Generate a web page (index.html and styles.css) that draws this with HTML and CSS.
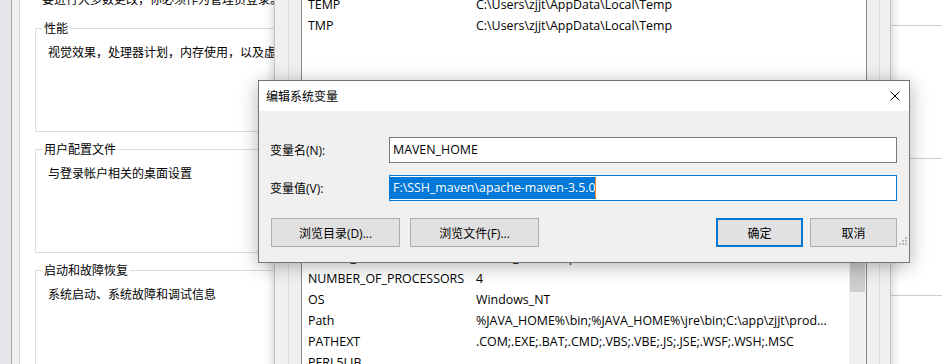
FILE: index.html
```html
<!DOCTYPE html>
<html lang="zh-CN">
<head>
  <meta charset="UTF-8">
  <title>编辑系统变量</title>
  <link rel="stylesheet" href="styles.css">
</head>
<body>
<div class="desktop">

  <!-- window far behind, on the right -->
  <div class="win back-win">
    <div class="back-line line-1"></div>
    <div class="back-line line-2"></div>
    <div class="back-line line-3"></div>
  </div>

  <!-- System properties, advanced tab -->
  <div class="win sys-win">
    <div class="tab-page">
      <p class="note">要进行大多数更改，你必须作为管理员登录。</p>
      <fieldset class="group">
        <legend>性能</legend>
        <div class="group-body">视觉效果，处理器计划，内存使用，以及虚拟内存</div>
      </fieldset>
      <fieldset class="group">
        <legend>用户配置文件</legend>
        <div class="group-body">与登录帐户相关的桌面设置</div>
      </fieldset>
      <fieldset class="group">
        <legend>启动和故障恢复</legend>
        <div class="group-body">系统启动、系统故障和调试信息</div>
      </fieldset>
    </div>
  </div>

  <!-- Environment variables -->
  <div class="win env-win">
    <div class="env-group user-group">
      <div class="list user-list">
        <div class="rows">
          <div class="row"><span class="name">OneDrive</span><span class="val">C:\Users\zjjt\OneDrive</span></div>
          <div class="row"><span class="name">Path</span><span class="val">C:\Users\zjjt\AppData\Local\Microsoft\WindowsApps;</span></div>
          <div class="row"><span class="name">TEMP</span><span class="val">C:\Users\zjjt\AppData\Local\Temp</span></div>
          <div class="row"><span class="name">TMP</span><span class="val">C:\Users\zjjt\AppData\Local\Temp</span></div>
        </div>
      </div>
    </div>
    <div class="env-group sys-group">
      <div class="list sys-list">
        <div class="rows">
          <div class="row"><span class="name">MAVEN_HOME</span><span class="val">F:\SSH_maven\apache-maven-3.5.0</span></div>
          <div class="row"><span class="name">NUMBER_OF_PROCESSORS</span><span class="val">4</span></div>
          <div class="row"><span class="name">OS</span><span class="val">Windows_NT</span></div>
          <div class="row"><span class="name">Path</span><span class="val">%JAVA_HOME%\bin;%JAVA_HOME%\jre\bin;C:\app\zjjt\prod...</span></div>
          <div class="row"><span class="name">PATHEXT</span><span class="val">.COM;.EXE;.BAT;.CMD;.VBS;.VBE;.JS;.JSE;.WSF;.WSH;.MSC</span></div>
          <div class="row"><span class="name">PERL5LIB</span><span class="val"></span></div>
        </div>
        <div class="scrollbar"><div class="thumb"></div></div>
      </div>
    </div>
  </div>

  <!-- Edit system variable dialog -->
  <div class="dlg">
    <div class="dlg-title">
      <span class="dlg-caption">编辑系统变量</span>
      <svg class="close" width="10" height="10" viewBox="0 0 10 10">
        <path d="M0.5 0.5 L9.5 9.5 M9.5 0.5 L0.5 9.5" stroke="#000" stroke-width="1" fill="none"/>
      </svg>
    </div>
    <div class="dlg-body">
      <div class="field">
        <label>变量名(N):</label>
        <div class="textbox"><span class="tb-text">MAVEN_HOME</span></div>
      </div>
      <div class="field">
        <label>变量值(V):</label>
        <div class="textbox focused"><span class="tb-text selected">F:\SSH_maven\apache-maven-3.5.0</span><span class="caret"></span></div>
      </div>
      <div class="btn-row">
        <button class="btn wide first">浏览目录(D)...</button>
        <button class="btn wide">浏览文件(F)...</button>
        <span class="spacer"></span>
        <button class="btn default">确定</button>
        <button class="btn">取消</button>
      </div>
      <svg class="grip" width="8" height="8" viewBox="0 0 8 8">
        <rect x="6" y="0" width="2" height="2" fill="#b9b9b9"/>
        <rect x="3" y="3" width="2" height="2" fill="#b9b9b9"/>
        <rect x="6" y="3" width="2" height="2" fill="#b9b9b9"/>
        <rect x="0" y="6" width="2" height="2" fill="#b9b9b9"/>
        <rect x="3" y="6" width="2" height="2" fill="#b9b9b9"/>
        <rect x="6" y="6" width="2" height="2" fill="#b9b9b9"/>
      </svg>
    </div>
  </div>

</div>
</body>
</html>
```

FILE: styles.css
```css
* {
  box-sizing: border-box;
}
body {
  margin: 0;
  font-family: "Open Sans", "Noto Sans CJK SC", sans-serif;
  font-size: 12px;
  color: #000;
}
.desktop {
  position: relative;
  width: 942px;
  height: 364px;
  overflow: hidden;
  background: linear-gradient(to right, #e4e6e9, #eceef0);
}
.win {
  position: absolute;
}

/* right background window */
.back-win {
  left: 880px;
  top: 0;
  width: 62px;
  height: 364px;
  background-color: #fff;
  padding-top: 25px;
  z-index: 1;
}
.back-line {
  height: 1px;
  background-color: #cdcdcd;
}
.line-2 {
  margin-top: 132px;
}
.line-3 {
  margin-top: 136px;
}

/* system properties */
.sys-win {
  left: 11px;
  top: -40px;
  width: 320px;
  height: 440px;
  background-color: #f0f0f0;
  border-left: 1px solid #a3a3a3;
  padding-left: 7px;
  z-index: 2;
}
.tab-page {
  height: 100%;
  background-color: #fff;
  border-left: 1px solid #d9d9d9;
  padding: 32px 0 0 15px;
}
.note {
  margin: 0 0 0 7px;
  line-height: 16px;
  white-space: nowrap;
}
.group {
  margin: 12px 0 0 0;
  width: 300px;
  border: 1px solid #dcdcdc;
  padding: 0 0 0 6px;
}
.group + .group {
  margin-top: 9px;
}
.group legend {
  padding: 0 2px;
  line-height: 17px;
}
.group-body {
  height: 94px;
  padding: 8px 0 0 6px;
  line-height: 16px;
  white-space: nowrap;
}

/* environment variables */
.env-win {
  left: 274px;
  top: -80px;
  width: 617px;
  height: 480px;
  background-color: #f0f0f0;
  border: 1px solid #c2c2c2;
  padding: 9px 10px 0 13px;
  box-shadow: 0 0 10px rgba(0,0,0,0.22);
  z-index: 3;
}
.env-group {
  border: 1px solid #dcdcdc;
  padding: 20px 12px 40px 12px;
}
.sys-group {
  margin-top: 81px;
}
.list {
  background-color: #fff;
  border: 1px solid #828790;
  display: flex;
}
.user-list {
  height: 152px;
}
.sys-list {
  height: 160px;
}
.rows {
  flex: 1;
  overflow: hidden;
}
.row {
  display: flex;
  height: 21px;
  line-height: 21px;
  padding-left: 6px;
  font-size: 12.4px;
  white-space: nowrap;
}
.name {
  width: 168px;
  flex: none;
}
.val {
  overflow: hidden;
}
.scrollbar {
  width: 17px;
  background-color: #f0f0f0;
  padding: 16px 1px 0 1px;
}
.thumb {
  height: 29px;
  background-color: #cdcdcd;
}

/* dialog */
.dlg {
  position: absolute;
  left: 258px;
  top: 80px;
  width: 652px;
  height: 183px;
  border: 1px solid #747474;
  background-color: #f0f0f0;
  box-shadow: 0 3px 18px rgba(0,0,0,0.3);
  z-index: 4;
}
.dlg-title {
  height: 30px;
  background-color: #fff;
  display: flex;
  align-items: center;
  padding: 0 9px 0 7px;
}
.dlg-caption {
  flex: 1;
}
.dlg-body {
  position: relative;
  padding: 26px 12px 0 11px;
}
.field {
  display: flex;
  align-items: center;
  margin-bottom: 12px;
}
.field label {
  width: 119px;
  flex: none;
}
.textbox {
  flex: 1;
  height: 26px;
  background-color: #fff;
  border: 1px solid #7a7a7a;
  display: flex;
  align-items: center;
  font-size: 12.4px;
  white-space: nowrap;
}
.textbox.focused {
  border-color: #0078d7;
}
.tb-text {
  padding-left: 3px;
  line-height: 22px;
}
.tb-text.selected {
  background-color: #0078d7;
  color: #fff;
}
.caret {
  width: 1px;
  height: 20px;
  margin-left: -1px;
  background-color: #ff8728;
}
.btn-row {
  display: flex;
  margin-top: 17px;
}
.btn {
  height: 29px;
  width: 87px;
  font-family: inherit;
  font-size: 12px;
  color: #000;
  background-color: #e1e1e1;
  border: 1px solid #adadad;
  padding: 0;
  margin-left: 7px;
}
.btn.wide {
  width: 129px;
  margin-left: 10px;
}
.btn.wide.first {
  margin-left: 1px;
}
.btn.default {
  border: 2px solid #0078d7;
  margin-left: 0;
}
.spacer {
  flex: 1;
}
.grip {
  position: absolute;
  right: 2px;
  bottom: 2px;
}
```
